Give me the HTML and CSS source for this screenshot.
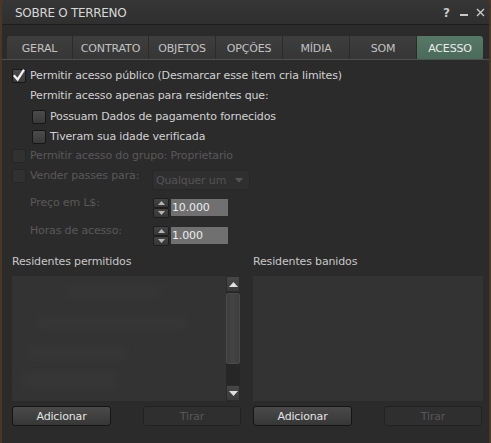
FILE: index.html
```html
<!DOCTYPE html>
<html lang="pt">
<head>
<meta charset="utf-8">
<title>Sobre o terreno</title>
<link rel="stylesheet" href="styles.css">
</head>
<body>
<div class="window">
  <div class="titlebar">
    <span class="title">SOBRE O TERRENO</span>
    <div class="tb-icons">
      <span class="help">?</span>
      <svg class="ico-min" width="9" height="12" viewBox="0 0 9 12"><rect x="0" y="8" width="8" height="2" fill="#c9c9c9"/></svg>
      <svg class="ico-close" width="9" height="9" viewBox="0 0 9 9"><path d="M1 1 L8 8 M8 1 L1 8" stroke="#c9c9c9" stroke-width="1.4" fill="none"/></svg>
    </div>
  </div>

  <div class="tabbar">
    <div class="tabs">
      <div class="tab first w66">GERAL</div>
      <div class="tab w76">CONTRATO</div>
      <div class="tab w67">OBJETOS</div>
      <div class="tab w67">OPÇÕES</div>
      <div class="tab w67">MÍDIA</div>
      <div class="tab w67">SOM</div>
      <div class="tab active w66">ACESSO</div>
    </div>
  </div>

  <div class="content">
    <div class="row r1">
      <span class="cb"><svg width="14" height="14" viewBox="0 0 14 14"><path d="M2.6 7.2 L5.6 10.6 L11.4 1.6" stroke="#f2f2f2" stroke-width="2.3" fill="none" stroke-linecap="square"/></svg></span>
      <span class="lbl">Permitir acesso público (Desmarcar esse item cria limites)</span>
    </div>
    <div class="row r2">
      <span class="lbl">Permitir acesso apenas para residentes que:</span>
    </div>
    <div class="row r3">
      <span class="cb"></span>
      <span class="lbl">Possuam Dados de pagamento fornecidos</span>
    </div>
    <div class="row r4">
      <span class="cb"></span>
      <span class="lbl">Tiveram sua idade verificada</span>
    </div>
    <div class="row r5">
      <span class="cb dis"></span>
      <span class="lbl dim">Permitir acesso do grupo: Proprietario</span>
    </div>
    <div class="row r6">
      <span class="cb dis"></span>
      <span class="lbl dim pass-lbl">Vender passes para:</span>
      <div class="dropdown">
        <span>Qualquer um</span>
        <svg width="8" height="5" viewBox="0 0 8 5"><path d="M0 0 L8 0 L4 4.5 Z" fill="#555"/></svg>
      </div>
    </div>
    <div class="row r7">
      <span class="lbl dim field-lbl">Preço em L$:</span>
      <div class="spinner">
        <div class="spin-btns">
          <div class="sb"><svg width="7" height="4" viewBox="0 0 7 4"><path d="M0 4 L7 4 L3.5 0 Z" fill="#b5b5b5"/></svg></div>
          <div class="sb"><svg width="7" height="4" viewBox="0 0 7 4"><path d="M0 0 L7 0 L3.5 4 Z" fill="#b5b5b5"/></svg></div>
        </div>
        <div class="num">10.000</div>
      </div>
    </div>
    <div class="row r8">
      <span class="lbl dim field-lbl">Horas de acesso:</span>
      <div class="spinner">
        <div class="spin-btns">
          <div class="sb"><svg width="7" height="4" viewBox="0 0 7 4"><path d="M0 4 L7 4 L3.5 0 Z" fill="#b5b5b5"/></svg></div>
          <div class="sb"><svg width="7" height="4" viewBox="0 0 7 4"><path d="M0 0 L7 0 L3.5 4 Z" fill="#b5b5b5"/></svg></div>
        </div>
        <div class="num">1.000</div>
      </div>
    </div>
  </div>

  <div class="lists">
    <div class="col col-left">
      <div class="col-label">Residentes permitidos</div>
      <div class="listbox lb-left">
        <div class="list-body">
          <span class="blur b1"></span>
          <span class="blur b2"></span>
          <span class="blur b3"></span>
          <span class="blur b4"></span>
        </div>
        <div class="scrollbar">
          <div class="sc-btn"><svg width="9" height="5" viewBox="0 0 9 5"><path d="M0 5 L9 5 L4.5 0 Z" fill="#e0e0e0"/></svg></div>
          <div class="sc-thumb"></div>
          <div class="sc-track"></div>
          <div class="sc-btn"><svg width="9" height="5" viewBox="0 0 9 5"><path d="M0 0 L9 0 L4.5 5 Z" fill="#e0e0e0"/></svg></div>
        </div>
      </div>
      <div class="btns">
        <div class="btn btn-add">Adicionar</div>
        <div class="btn btn-rem disabled">Tirar</div>
      </div>
    </div>
    <div class="col col-right">
      <div class="col-label">Residentes banidos</div>
      <div class="listbox lb-right"></div>
      <div class="btns">
        <div class="btn btn-add">Adicionar</div>
        <div class="btn btn-rem disabled">Tirar</div>
      </div>
    </div>
  </div>
</div>
</body>
</html>
```

FILE: styles.css
```css
* { box-sizing: border-box; }

html, body {
  margin: 0;
  width: 491px;
  height: 443px;
  overflow: hidden;
  background: #4a3728;
}

body {
  font-family: "DejaVu Sans", "Noto Sans", sans-serif;
  font-size: 11px;
  letter-spacing: -0.15px;
  color: #d2d2d2;
}

.window {
  margin-left: 2px;
  width: 487px;
  height: 443px;
  background: #2b2b2b;
  border-radius: 5px 5px 0 0;
  overflow: hidden;
  display: flex;
  flex-direction: column;
}

/* title bar */
.titlebar {
  height: 25px;
  flex: none;
  background: linear-gradient(#363636, #2f2f2f);
  border-bottom: 1px solid #1d1d1d;
  display: flex;
  align-items: center;
  padding-left: 13px;
  padding-right: 4px;
}
.title {
  flex: 1;
  font-size: 12px;
  letter-spacing: -0.3px;
  color: #d8d8d8;
  padding-top: 2px;
}
.tb-icons {
  display: flex;
  align-items: center;
}
.help {
  font-weight: bold;
  font-size: 12px;
  color: #c9c9c9;
  width: 9px;
  margin-right: 8px;
  padding-top: 1px;
}
.ico-min { margin-right: 7px; }
.ico-close { margin-top: 1px; }

/* tabs */
.tabbar {
  margin-top: 11px;
  height: 24px;
  flex: none;
  border-bottom: 1px solid #4f4f4f;
}
.tabs {
  margin-left: 5px;
  display: flex;
  height: 23px;
}
.tab {
  height: 23px;
  display: flex;
  align-items: center;
  justify-content: center;
  background: linear-gradient(#3e3e3e, #363636);
  border-right: 1px solid #2b2b2b;
  color: #c2c2c2;
  padding-top: 1px;
}
.tab.first { border-radius: 3px 0 0 0; }
.tab.active {
  background: linear-gradient(#577767, #4a6a5a);
  color: #ececec;
  border-right: none;
  border-radius: 0 3px 0 0;
}
.w66 { width: 66px; }
.w67 { width: 67px; }
.w76 { width: 76px; }

/* content rows */
.content {
  padding: 6px 0 0 10px;
  flex: none;
}
.row {
  display: flex;
  align-items: center;
  height: 20px;
}
.r2 { padding-left: 18px; }
.r3 { padding-left: 20px; margin-top: 1px; }
.r4 { padding-left: 20px; height: 19px; }
.r5 { height: 19px; }
.r6 { height: 21px; margin-top: 4px; align-items: flex-start; }
.r7 { margin-top: 8px; padding-left: 18px; align-items: flex-start; }
.r8 { margin-top: 8px; padding-left: 18px; align-items: flex-start; }

.lbl { line-height: 14px; white-space: nowrap; }
.dim { color: #595959; }

.cb {
  width: 14px;
  height: 14px;
  flex: none;
  margin-right: 4px;
  border: 1px solid #171717;
  border-radius: 2px;
  background: linear-gradient(#4b4b4b, #3a3a3a);
  position: relative;
}
.cb svg { position: absolute; left: -1px; top: -1px; }
.cb.dis {
  background: #313131;
  border-color: #262626;
}

.pass-lbl { width: 122px; }
.field-lbl { width: 123px; margin-top: -2px; }

.dropdown {
  margin-top: 1px;
  width: 98px;
  height: 20px;
  background: #2f2f2f;
  border: 1px solid #272727;
  border-radius: 3px;
  color: #545454;
  display: flex;
  align-items: center;
  justify-content: space-between;
  padding: 0 6px 0 3px;
}

.spinner { display: flex; height: 20px; }
.spin-btns {
  width: 16px;
  display: flex;
  flex-direction: column;
  margin-right: 1px;
}
.sb {
  height: 10px;
  background: linear-gradient(#444, #363636);
  border: 1px solid #1d1d1d;
  border-radius: 2px;
  display: flex;
  align-items: center;
  justify-content: center;
}
.num {
  width: 59px;
  height: 19px;
  background: #707070;
  border: 1px solid #2a2a2a;
  color: #ececec;
  padding-left: 1px;
  line-height: 18px;
}

/* lists */
.lists {
  display: flex;
  gap: 12px;
  padding-left: 10px;
  margin-top: 8px;
}
.col { display: flex; flex-direction: column; }
.col-left { width: 229px; }
.col-right { width: 230px; }
.col-label {
  line-height: 16px;
  color: #c8c8c8;
}
.listbox {
  margin-top: 6px;
  height: 125px;
  background: #333333;
}
.lb-left { width: 228px; display: flex; }
.lb-right { width: 230px; }

.list-body { flex: 1; position: relative; }
.blur {
  position: absolute;
  background: #363636;
  border-radius: 6px;
  filter: blur(3px);
}
.b1 { left: 55px; top: 10px; width: 95px; height: 12px; }
.b2 { left: 25px; top: 40px; width: 150px; height: 14px; }
.b3 { left: 15px; top: 70px; width: 100px; height: 14px; }
.b4 { left: 10px; top: 95px; width: 95px; height: 18px; }

.scrollbar {
  width: 14px;
  display: flex;
  flex-direction: column;
  background: #262626;
}
.sc-btn {
  height: 16px;
  flex: none;
  background: linear-gradient(#474747, #3a3a3a);
  border: 1px solid #2a2a2a;
  display: flex;
  align-items: center;
  justify-content: center;
}
.sc-thumb {
  height: 71px;
  flex: none;
  margin-top: 1px;
  background: linear-gradient(90deg, #3d3d3d, #444 50%, #3d3d3d);
  border: 1px solid #4a4a4a;
  border-radius: 2px;
}
.sc-track { flex: 1; }

.btns {
  display: flex;
  justify-content: space-between;
  margin-top: 5px;
}
.btn {
  height: 20px;
  border: 1px solid #151515;
  border-radius: 3px;
  background: linear-gradient(#4a4a4a, #373737);
  color: #e4e4e4;
  display: flex;
  align-items: center;
  justify-content: center;
}
.btn-add { width: 99px; }
.btn-rem { width: 98px; }
.col-right .btn-rem { margin-right: 1px; }
.btn.disabled {
  background: #2f2f2f;
  border-color: #222;
  color: #575757;
}
```
